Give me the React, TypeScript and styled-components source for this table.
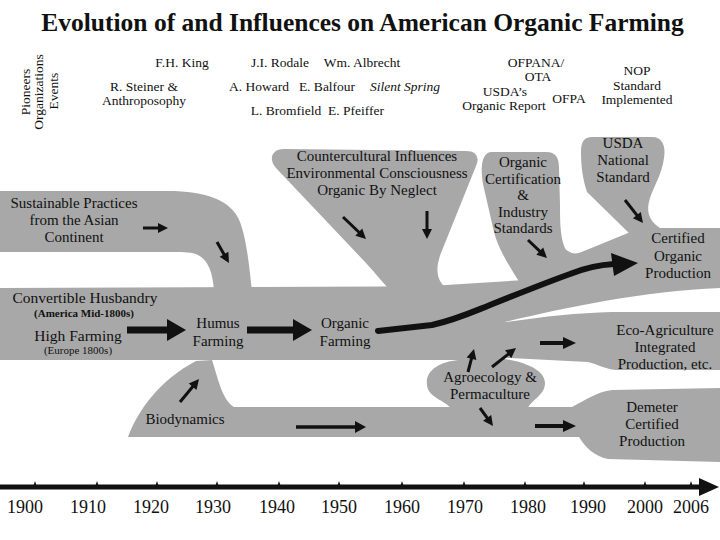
import React from 'react';
import styled, { createGlobalStyle } from 'styled-components';

const GlobalStyle = createGlobalStyle`
  html, body {
    margin: 0;
    padding: 0;
    background: #ffffff;
  }
  body {
    font-family: 'Liberation Serif', 'Times New Roman', serif;
    color: #111111;
  }
`;

const Page = styled.div`
  width: 720px;
  height: 540px;
  display: flex;
  flex-direction: column;
  overflow: hidden;
  background: #ffffff;
`;

const Title = styled.h1`
  margin: 0;
  height: 44px;
  padding-left: 5px;
  line-height: 46px;
  text-align: center;
  font-family: 'Liberation Serif', 'Times New Roman', serif;
  font-weight: 700;
  font-size: 25.5px;
  color: #111111;
  white-space: nowrap;
`;

const Chart = styled.svg`
  display: block;
  width: 720px;
  height: 496px;
  font-family: 'Liberation Serif', 'Times New Roman', serif;
`;

const Flow = styled.path`
  fill: #a8a8a8;
  stroke: none;
`;

const Shaft = styled.line<{ $w: number }>`
  stroke: #111111;
  stroke-width: ${(p) => p.$w}px;
  stroke-linecap: butt;
`;

const Head = styled.polygon`
  fill: #111111;
`;

const Trend = styled.path`
  fill: none;
  stroke: #111111;
  stroke-width: 6px;
  stroke-linecap: round;
  stroke-linejoin: round;
`;

const Axis = styled.line`
  stroke: #111111;
  stroke-width: 5px;
`;

const Label = styled.text<{ $size?: number; $italic?: boolean; $bold?: boolean }>`
  font-family: 'Liberation Serif', 'Times New Roman', serif;
  font-size: ${(p) => p.$size ?? 15}px;
  font-style: ${(p) => (p.$italic ? 'italic' : 'normal')};
  font-weight: ${(p) => (p.$bold ? 700 : 400)};
  fill: #111111;
  text-anchor: middle;
`;

const Caption = styled.text`
  font-family: 'Liberation Serif', 'Times New Roman', serif;
  font-size: 13.5px;
  fill: #111111;
  text-anchor: middle;
`;

const YearLabel = styled.text`
  font-family: 'Liberation Serif', 'Times New Roman', serif;
  font-size: 18px;
  fill: #111111;
  text-anchor: middle;
`;

type Pt = [number, number];

const Arrow = ({ from, to, w = 3, len = 10, spread = 10 }: { from: Pt; to: Pt; w?: number; len?: number; spread?: number }) => {
  const dx = to[0] - from[0];
  const dy = to[1] - from[1];
  const d = Math.hypot(dx, dy);
  const ux = dx / d;
  const uy = dy / d;
  const bx = to[0] - ux * len;
  const by = to[1] - uy * len;
  const px = -uy * (spread / 2);
  const py = ux * (spread / 2);
  const pts = `${to[0]},${to[1]} ${bx + px},${by + py} ${bx - px},${by - py}`;
  return (
    <g>
      <Shaft $w={w} x1={from[0]} y1={from[1]} x2={bx + ux} y2={by + uy} />
      <Head points={pts} />
    </g>
  );
};

// gray streams, in page coordinates
const flows = [
  // sustainable practices from asia
  'M0,191 L168,191 C205,191 232,200 240,222 C246,238 249,262 252,292 L214,292 C213,272 208,260 198,255 C192,252 185,252 172,252 L0,252 Z',
  // main stream
  'M0,288 L505,286 L505,360 L0,360 Z',
  // countercultural funnel
  'M284,149 L466,151 C476,151 480,157 476,166 L441,253 C435,268 437,280 444,286 L446,292 L392,292 C384,284 376,274 366,263 L276,168 C268,159 272,149 284,149 Z',
  // certification
  'M492,152 L546,152 C556,152 559,158 559,168 L560,205 C560,228 561,240 566,250 L580,258 L525,292 L518,280 C508,264 498,248 494,232 L483,184 C480,166 482,152 492,152 Z',
  // usda national standard
  'M592,137 L652,137 C662,137 666,145 664,158 C662,174 654,186 650,198 C646,210 648,220 660,228 L630,234 L587,192 C583,180 581,168 581,152 C581,142 584,137 592,137 Z',
  // to certified organic production
  'M430,323 L500,323 C560,309 640,291 720,288 L720,228 L655,228 L633,231 L584,251 C576,255 569,254 564,248 L525,280 L430,286 Z',
  // eco-agriculture
  'M430,323 L500,323 C540,317 575,313 612,312 L720,312 L720,370 L616,370 C604,369 598,364 588,362 L510,358 L430,360 Z',
  // biodynamics to demeter
  'M128,437 C138,410 160,380 196,361 L212,360 C218,378 222,400 234,407 L572,407 C586,400 596,392 612,390 L720,388 L720,462 L608,459 C594,456 586,448 579,437 Z',
  // agroecology
  'M427,385 C425,370 440,362 458,360 L505,359 C525,362 545,370 545,383 C545,396 530,400 527,410 L452,410 C446,400 428,398 427,385 Z',
];

const smallArrows: [Pt, Pt][] = [
  [[143, 228], [168, 228]],
  [[217, 242], [229, 263]],
  [[343, 217], [366, 239]],
  [[427, 211], [427, 239]],
  [[528, 240], [547, 258]],
  [[625, 200], [643, 223]],
  [[180, 402], [199, 379]],
  [[468, 372], [474, 349]],
  [[492, 367], [516, 348]],
  [[480, 408], [493, 426]],
];

const names: { x: number; y: number; t: string; italic?: boolean }[] = [
  { x: 182, y: 66.5, t: 'F.H. King' },
  { x: 280, y: 66.5, t: 'J.I. Rodale' },
  { x: 362, y: 66.5, t: 'Wm. Albrecht' },
  { x: 144, y: 90.5, t: 'R. Steiner &' },
  { x: 144, y: 104.5, t: 'Anthroposophy' },
  { x: 259, y: 90.5, t: 'A. Howard' },
  { x: 327, y: 90.5, t: 'E. Balfour' },
  { x: 405, y: 90.5, t: 'Silent Spring', italic: true },
  { x: 286, y: 114.5, t: 'L. Bromfield' },
  { x: 356, y: 114.5, t: 'E. Pfeiffer' },
  { x: 536, y: 66.5, t: 'OFPANA/' },
  { x: 538, y: 80.5, t: 'OTA' },
  { x: 505, y: 95.5, t: 'USDA\u2019s' },
  { x: 504, y: 109.5, t: 'Organic Report' },
  { x: 569, y: 102.5, t: 'OFPA' },
  { x: 637, y: 74.5, t: 'NOP' },
  { x: 637, y: 89.5, t: 'Standard' },
  { x: 637, y: 103.5, t: 'Implemented' },
];

const blocks: { x: number; y: number; lines: string[]; gap?: number }[] = [
  { x: 74, y: 208, lines: ['Sustainable Practices', 'from the Asian', 'Continent'] },
  { x: 377, y: 161, lines: ['Countercultural Influences', 'Environmental Consciousness', 'Organic By Neglect'] },
  { x: 523, y: 167, lines: ['Organic', 'Certification', '&', 'Industry', 'Standards'], gap: 16.5 },
  { x: 623, y: 148, lines: ['USDA', 'National', 'Standard'] },
  { x: 678, y: 243, lines: ['Certified', 'Organic', 'Production'], gap: 17.5 },
  { x: 218, y: 328, lines: ['Humus', 'Farming'], gap: 18 },
  { x: 345, y: 328, lines: ['Organic', 'Farming'], gap: 18 },
  { x: 185, y: 424, lines: ['Biodynamics'] },
  { x: 490, y: 382, lines: ['Agroecology &', 'Permaculture'] },
  { x: 665, y: 335, lines: ['Eco-Agriculture', 'Integrated', 'Production, etc.'] },
  { x: 652, y: 412, lines: ['Demeter', 'Certified', 'Production'] },
];

const ticks = [35, 97, 157, 217, 279, 339, 402, 464, 525, 584, 645, 691];
const years: [number, string][] = [
  [25, '1900'], [88, '1910'], [151, '1920'], [213, '1930'], [277, '1940'], [339, '1950'],
  [402, '1960'], [465, '1970'], [528, '1980'], [588, '1990'], [645, '2000'], [691, '2006'],
];

const App: React.FC = () => {
  return (
    <Page>
      <GlobalStyle />
      <Title>Evolution of and Influences on American Organic Farming</Title>
      <Chart viewBox="0 44 720 496">
        {flows.map((d, i) => (
          <Flow key={i} d={d} />
        ))}

        <Caption transform="translate(30,92) rotate(-90)">Pioneers</Caption>
        <Caption transform="translate(43,92) rotate(-90)">Organizations</Caption>
        <Caption transform="translate(58,91) rotate(-90)">Events</Caption>

        {names.map((n) => (
          <Label key={n.t} x={n.x} y={n.y} $size={13.5} $italic={n.italic}>
            {n.t}
          </Label>
        ))}

        {blocks.map((b) =>
          b.lines.map((line, i) => (
            <Label key={b.x + line} x={b.x} y={b.y + i * (b.gap ?? 17)}>
              {line}
            </Label>
          ))
        )}

        <Label x={85} y={303} $size={15.5}>Convertible Husbandry</Label>
        <Label x={84} y={317} $size={11} $bold>(America Mid-1800s)</Label>
        <Label x={78} y={341} $size={15.5}>High Farming</Label>
        <Label x={78} y={354} $size={11}>(Europe 1800s)</Label>

        <Arrow from={[127, 330]} to={[186, 330]} w={7} len={19} spread={22} />
        <Arrow from={[247, 330]} to={[312, 330]} w={7} len={19} spread={22} />
        {smallArrows.map(([a, b], i) => (
          <Arrow key={i} from={a} to={b} />
        ))}
        <Arrow from={[296, 427]} to={[366, 427]} w={3.5} len={11} spread={12} />
        <Arrow from={[540, 343]} to={[576, 343]} w={4} len={13} spread={12} />
        <Arrow from={[535, 426]} to={[576, 426]} w={4} len={13} spread={12} />

        <Trend d="M378,331 L432,325 C455,320 470,313 490,305 C520,293 545,283 570,274 C585,268 597,265 614,264" />
        <Head points="611,253 638,263 614,276" />

        <Axis x1={0} y1={487} x2={702} y2={487} />
        <Head points="699,478 719,487 699,496" />
        {ticks.map((x) => (
          <Head key={x} points={`${x - 2},487 ${x},481 ${x + 2},487`} />
        ))}
        {years.map(([x, y]) => (
          <YearLabel key={y} x={x} y={513}>
            {y}
          </YearLabel>
        ))}
      </Chart>
    </Page>
  );
};

export default App;
